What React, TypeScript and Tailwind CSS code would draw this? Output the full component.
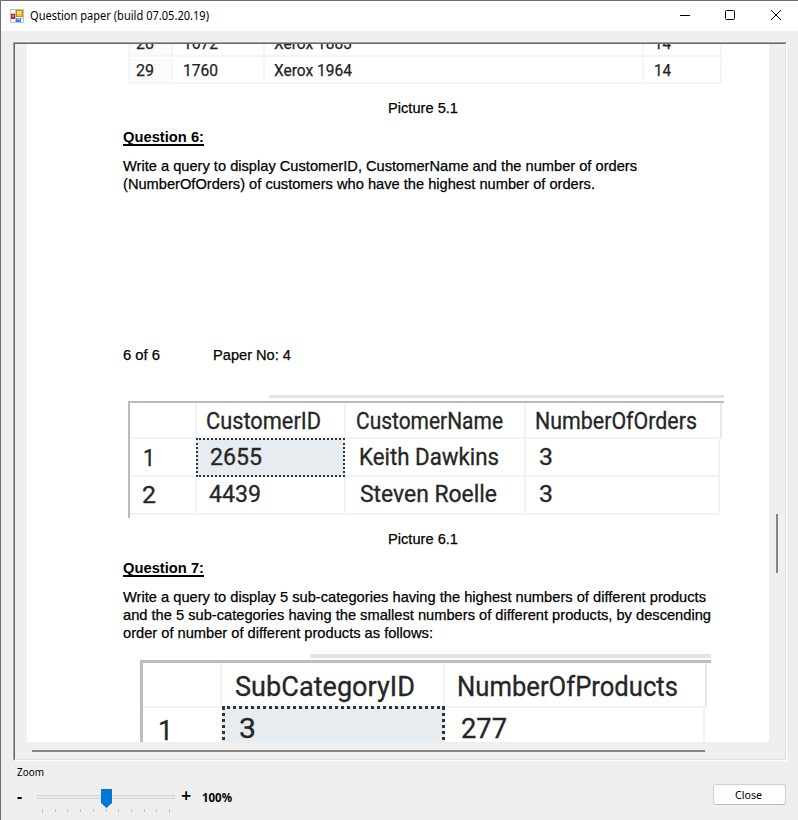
import { useLayoutEffect, useRef, useState, type ReactNode } from "react";

/** Single line of text that is squeezed or stretched to an exact width. */
function Fit({
  w,
  className = "",
  inner = "",
  children,
}: {
  w: number;
  className?: string;
  inner?: string;
  children: ReactNode;
}) {
  const ref = useRef<HTMLSpanElement>(null);
  const [scale, setScale] = useState(1);
  useLayoutEffect(() => {
    const el = ref.current;
    if (el) setScale((s) => (w * s) / el.getBoundingClientRect().width);
  }, [w]);
  return (
    <span className={`block whitespace-nowrap ${className}`} style={{ width: w }}>
      <span ref={ref} className={`inline-block origin-left ${inner}`} style={{ transform: `scaleX(${scale})` }}>
        {children}
      </span>
    </span>
  );
}

const body =
  "h-[18px] text-[15px] leading-[18px] font-['Liberation_Sans',sans-serif] text-black [-webkit-text-stroke:0.25px_black]";
const heading =
  "h-[18px] text-[15px] leading-[18px] font-bold font-['Liberation_Sans',sans-serif] text-black";
const underlined = "underline decoration-[1.5px] underline-offset-[2px] [text-decoration-skip-ink:none]";

function TitleBar() {
  return (
    <header className="flex h-[30px] shrink-0 items-center bg-white pl-[9px]">
      <svg width="14" height="14" viewBox="0 0 14 14" shapeRendering="crispEdges">
        <path d="M0.5 .5h13v13H.5z" fill="#fff" stroke="#c3c3c3" />
        <path d="M5.5 0v14M0 9.500h14M0 4.500h5" stroke="#c3c3c3" />
        <rect x="6" y="1" width="7" height="7" fill="#c08a10" />
        <rect x="7" y="2" width="5" height="5" fill="#f5c22e" />
        <rect x="7" y="2" width="4" height="3" fill="#ffe27a" />
        <rect x="1" y="5" width="4" height="5" fill="#b3261a" />
        <rect x="2" y="6" width="2" height="2" fill="#ee8470" />
        <rect x="6" y="9" width="5" height="4" fill="#3f7fe0" />
        <rect x="7" y="9" width="3" height="2" fill="#8ab8fa" />
      </svg>
      <Fit w={179} className="ml-[6px] text-[12px] leading-[16px] text-black">
        Question paper (build 07.05.20.19)
      </Fit>
      <div className="ml-auto mr-[17px] flex items-center pb-[2px] text-black">
        <svg width="10" height="10" viewBox="0 0 10 10">
          <path d="M0 5.500h10" stroke="currentColor" />
        </svg>
        <svg width="10" height="10" viewBox="0 0 10 10" className="ml-[35px]">
          <rect x=".5" y=".5" width="9" height="9" rx="1" fill="none" stroke="currentColor" />
        </svg>
        <svg width="10" height="10" viewBox="0 0 10 10" className="ml-[36px]">
          <path d="M0 0l10 10M10 0L0 10" stroke="currentColor" />
        </svg>
      </div>
    </header>
  );
}

function OrdersRow({ no, id, name, qty }: { no: string; id: string; name: string; qty: string }) {
  return (
    <div className="flex h-[27px] w-[594px] border-b-2 border-[#f5f5f5] pt-[1px] text-[17px] leading-[25px] text-[#222] font-['Roboto',sans-serif] [-webkit-text-stroke:0.25px_#222]">
      <div className="w-[45px] border-x-2 border-[#f5f5f5] bg-[#fbfbfc] pl-[6px]">
        <Fit w={18}>{no}</Fit>
      </div>
      <div className="w-[92px] border-r-2 border-[#f5f5f5] pl-[10px]">
        <Fit w={35}>{id}</Fit>
      </div>
      <div className="w-[379px] border-r-2 border-[#f5f5f5] pl-[9px]">
        <Fit w={78}>{name}</Fit>
      </div>
      <div className="flex-1 border-r-2 border-[#f5f5f5] pl-[10px]">
        <Fit w={17}>{qty}</Fit>
      </div>
    </div>
  );
}

function CustomersTable() {
  const line = "border-[#f2f2f2]";
  return (
    <div className="ml-[101px] w-[596px]">
      <div className="ml-[141px] h-[3px] bg-[#e4e4e5]" />
      <div className="mt-[3px] h-[117px] border-l-2 border-t-2 border-[#b9babf] text-[23px] text-[#262626] font-['Roboto',sans-serif] [-webkit-text-stroke:0.3px_#262626]">
        <div className={`flex h-[36px] w-[592px] border-b-2 leading-[38px] ${line}`}>
          <div className={`w-[67px] border-r-2 ${line}`} />
          <div className={`w-[149px] border-r-2 pl-[9px] ${line}`}>
            <Fit w={115}>CustomerID</Fit>
          </div>
          <div className={`w-[180px] border-r-2 pl-[10px] ${line}`}>
            <Fit w={147}>CustomerName</Fit>
          </div>
          <div className="flex-1 border-r-2 border-[#e9e9ea] pl-[9px]">
            <Fit w={162}>NumberOfOrders</Fit>
          </div>
        </div>
        <div className={`flex h-[38px] w-[590px] border-b-2 leading-[37px] ${line}`}>
          <div className="w-[66px] pl-[13px] pt-[1px]">
            <Fit w={12}>1</Fit>
          </div>
          <div className="-mt-[1px] h-[39px] w-[149px] border-2 border-dotted border-[#333] bg-[#e7ecf1] pl-[12px] leading-[35px]">
            <Fit w={52}>2655</Fit>
          </div>
          <div className={`w-[181px] border-r-2 pl-[14px] ${line}`}>
            <Fit w={140}>Keith Dawkins</Fit>
          </div>
          <div className={`flex-1 border-r-2 pl-[13px] ${line}`}>
            <Fit w={14}>3</Fit>
          </div>
        </div>
        <div className={`flex h-[38px] w-[590px] border-b-2 leading-[36px] ${line}`}>
          <div className={`w-[67px] border-r-2 pl-[12px] pt-[1px] ${line}`}>
            <Fit w={14}>2</Fit>
          </div>
          <div className={`w-[149px] border-r-2 pl-[12px] ${line}`}>
            <Fit w={52}>4439</Fit>
          </div>
          <div className={`w-[180px] border-r-2 pl-[14px] ${line}`}>
            <Fit w={137}>Steven Roelle</Fit>
          </div>
          <div className={`flex-1 border-r-2 pl-[13px] ${line}`}>
            <Fit w={14}>3</Fit>
          </div>
        </div>
      </div>
    </div>
  );
}

function ProductsTable() {
  return (
    <div className="ml-[113px] w-[571px]">
      <div className="ml-[170px] h-[4px] bg-[#e4e4e5]" />
      <div className="mt-[2px] h-[100px] border-l-[3px] border-t-[3px] border-[#bcbdc1] text-[28px] text-[#262626] font-['Roboto',sans-serif] [-webkit-text-stroke:0.3px_#262626]">
        <div className="flex h-[45px] w-[564px] border-b-2 border-[#f2f2f2] leading-[47px]">
          <div className="w-[79px] border-r-2 border-[#f2f2f2]" />
          <div className="w-[223px] border-r-2 border-[#f2f2f2] pl-[13px]">
            <Fit w={180}>SubCategoryID</Fit>
          </div>
          <div className="flex-1 border-r-2 border-[#e9e9ea] pl-[12px]">
            <Fit w={221}>NumberOfProducts</Fit>
          </div>
        </div>
        <div className="flex h-[46px] w-[562px] leading-[43px]">
          <div className="w-[79px] pl-[15px] pt-[1px]">
            <Fit w={15}>1</Fit>
          </div>
          <div className="-mt-[2px] h-[48px] w-[223px] border-[3px] border-dotted border-[#333] bg-[#e7ecf1] pl-[14px] leading-[40px]">
            <Fit w={17}>3</Fit>
          </div>
          <div className="flex-1 border-r-2 border-[#f2f2f2] pl-[16px] leading-[42px]">
            <Fit w={46}>277</Fit>
          </div>
        </div>
      </div>
    </div>
  );
}

function Paper() {
  return (
    <div className="h-[698px] w-[742px] overflow-hidden rounded-br-[2px] bg-white">
      <div className="-mt-[14px] ml-[101px]">
        <OrdersRow no="28" id="1672" name="Xerox 1883" qty="14" />
        <OrdersRow no="29" id="1760" name="Xerox 1964" qty="14" />
      </div>
      <Fit w={70} className={`ml-[361px] mt-[15px] ${body}`}>Picture 5.1</Fit>
      <Fit w={81} inner={underlined} className={`ml-[96px] mt-[11px] ${heading}`}>Question 6:</Fit>
      <div className="ml-[96px] mt-[11px]">
        <Fit w={514} className={body}>
          Write a query to display CustomerID, CustomerName and the number of orders
        </Fit>
        <Fit w={472} className={body}>
          (NumberOfOrders) of customers who have the highest number of orders.
        </Fit>
      </div>
      <div className="ml-[96px] mt-[153px] flex">
        <Fit w={37} className={body}>6 of 6</Fit>
        <Fit w={78} className={`ml-[53px] ${body}`}>Paper No: 4</Fit>
      </div>
      <div className="mt-[31px]">
        <CustomersTable />
      </div>
      <Fit w={70} className={`ml-[361px] mt-[12px] ${body}`}>Picture 6.1</Fit>
      <Fit w={81} inner={underlined} className={`ml-[96px] mt-[11px] ${heading}`}>Question 7:</Fit>
      <div className="ml-[96px] mt-[11px]">
        <Fit w={583} className={body}>
          Write a query to display 5 sub-categories having the highest numbers of different products
        </Fit>
        <Fit w={588} className={body}>
          and the 5 sub-categories having the smallest numbers of different products, by descending
        </Fit>
        <Fit w={310} className={body}>order of number of different products as follows:</Fit>
      </div>
      <div className="mt-[12px]">
        <ProductsTable />
      </div>
    </div>
  );
}

function ZoomSlider() {
  const ticks = [0, 13, 25, 38, 51, 64, 76, 89, 102, 114, 127];
  return (
    <svg width="140" height="26" viewBox="0 0 140 26" shapeRendering="crispEdges">
      <rect x=".5" y="7.500" width="137" height="3" fill="#e7eaea" stroke="#d6d6d6" />
      {ticks.map((x, i) => (
        <rect key={x} x={x + 5} y="21" width="1" height={i === 0 || i === 10 ? 4 : 3} fill="#c4c4c4" />
      ))}
      <path d="M64 1h11v14l-5.500 5-5.500-5z" fill="#0078d7" shapeRendering="auto" />
    </svg>
  );
}

export default function App() {
  return (
    <div className="flex h-[820px] w-[798px] flex-col overflow-hidden border-l border-t border-[#6e6e6e] bg-[#efefef] font-['Noto_Sans',sans-serif]">
      <TitleBar />
      <main className="ml-[12px] mt-[11px] h-[719px] w-[774px] shrink-0 border border-b-white border-l-[#a0a0a0] border-r-white border-t-[#a0a0a0]">
        <div className="h-full border border-b-[#e1e1e1] border-l-[#696969] border-r-[#e1e1e1] border-t-[#696969] pl-[12px]">
          <div className="flex">
            <Paper />
            <div className="ml-[7px] mt-[470px] h-[59px] w-[2px] bg-[#858585]" />
          </div>
          <div className="ml-[5px] mt-[8px] h-[2px] w-[673px] bg-[#858585]" />
        </div>
      </main>
      <footer className="flex flex-1 pl-[16px] text-black">
        <div>
          <Fit w={27} className="mt-[3px] h-[16px] text-[11.5px] leading-[16px]">Zoom</Fit>
          <div className="mt-[8px] flex h-[26px]">
            <span className="w-[20px] text-[16px] font-bold leading-[16px]">-</span>
            <ZoomSlider />
            <span className="ml-[4px] w-[21px] text-[18px] font-semibold leading-[15px]">+</span>
            <Fit w={30} className="text-[12px] font-bold leading-[20px]">100%</Fit>
          </div>
        </div>
        <button className="ml-auto mr-[12px] mt-[23px] flex h-[21px] w-[73px] items-center justify-center rounded-[3px] border border-[#d0d0d0] border-b-[#bababa] bg-[#fdfdfd]">
          <Fit w={27} className="-ml-[2px] text-[11.5px] leading-[16px]">Close</Fit>
        </button>
      </footer>
    </div>
  );
}
